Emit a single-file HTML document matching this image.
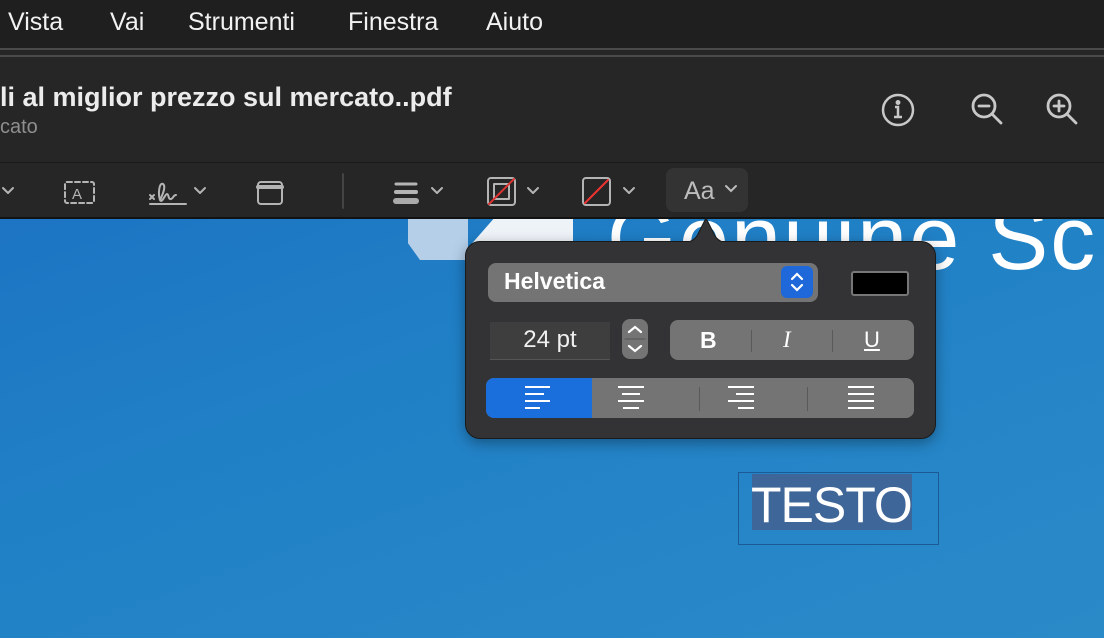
<!DOCTYPE html>
<html><head><meta charset="utf-8"><style>
*{margin:0;padding:0;box-sizing:border-box}
body{width:1104px;height:638px;overflow:hidden;position:relative;font-family:"Liberation Sans",sans-serif;background:linear-gradient(160deg,#1a6cc0 0%,#2080c6 50%,#2a8ac8 100%)}
.abs{position:absolute}
#menu{left:0;top:0;width:1104px;height:48px;background:#1f1f1f;color:#f2f2f2;font-size:25px}
#menu span{position:absolute;top:8px}
#bar{left:0;top:48px;width:1104px;height:170px;background:#262626;border-top:2px solid #4a4a4a}
#bar:before{content:"";position:absolute;left:0;top:5px;width:100%;height:2px;background:#4a4a4a}
#tb{left:0;top:162px;width:1104px;height:1px;background:#1a1a1a}
#bline{left:0;top:217px;width:1104px;height:2px;background:#121212}
.title{left:0;top:82px;color:#ececec;font-size:27px;font-weight:bold;white-space:nowrap}
.sub{left:0;top:116px;color:#8e8e8e;font-size:20px}
svg{position:absolute}
#pop{left:465px;top:241px;width:471px;height:198px;background:#333335;border:1px solid #1a1a1a;border-radius:15px;box-shadow:0 4px 14px rgba(0,0,0,.35)}
.g{background:#747474;border-radius:8px;position:absolute}
</style></head><body>
<!-- logo -->
<div class="abs" style="left:408px;top:218px;width:60px;height:42px;background:#b5cfe9;clip-path:polygon(0 0,100% 0,100% 100%,20% 100%,0 60%)"></div>
<div class="abs" style="left:468px;top:218px;width:105px;height:30px;background:#eef3f8;clip-path:polygon(25% 0,100% 0,100% 100%,0 100%)"></div>
<div class="abs" style="left:607px;top:188px;color:#fff;font-size:90px;letter-spacing:2px;white-space:nowrap">Genuine Sc</div>

<div id="menu" class="abs">
<span style="left:8px">Vista</span><span style="left:110px">Vai</span><span style="left:188px">Strumenti</span><span style="left:348px">Finestra</span><span style="left:486px">Aiuto</span>
</div>
<div id="bar" class="abs"></div>
<div class="abs title">li al miglior prezzo sul mercato..pdf</div>
<div class="abs sub">cato</div>
<!-- right icons -->
<svg style="left:880px;top:92px" width="36" height="36" viewBox="0 0 36 36" fill="none" stroke="#c8c8c8" stroke-width="2.5"><circle cx="18" cy="18" r="15"/><circle cx="18" cy="10.5" r="1.2" fill="#c8c8c8"/><path d="M15 15h3v10M14 25h8"/></svg>
<svg style="left:968px;top:90px" width="40" height="40" viewBox="0 0 40 40" fill="none" stroke="#c8c8c8" stroke-width="2.8" stroke-linecap="round"><circle cx="16" cy="16" r="11"/><path d="M24 24l9 9M11 16h10"/></svg>
<svg style="left:1043px;top:90px" width="40" height="40" viewBox="0 0 40 40" fill="none" stroke="#c8c8c8" stroke-width="2.8" stroke-linecap="round"><circle cx="16" cy="16" r="11"/><path d="M24 24l9 9M11 16h10M16 11v10"/></svg>
<div id="tb" class="abs"></div>
<!-- toolbar icons -->
<svg style="left:0;top:170px" width="760" height="45" viewBox="0 0 760 45" fill="none" stroke="#b4b4b4" stroke-width="2" stroke-linecap="round" stroke-linejoin="round">
<path d="M3 18l5 5 5-5"/>
<rect x="65" y="12" width="29" height="21" rx="2" stroke-dasharray="5 3"/>
<text x="72" y="29" fill="#b4b4b4" stroke="none" font-size="15" font-family="Liberation Sans">A</text>
<path d="M150 25l4 4M154 25l-4 4M150 34h36M160 30c3-6 6-14 3-16-4-2-5 10-3 16 2 4 5-6 7-6s1 6 4 5 2-4 5-4"/>
<path d="M195 18l5 5 5-5"/>
<rect x="258" y="12" width="24" height="22" rx="3"/><path d="M258 17h24" stroke-width="4"/>
<path d="M343 4v34" stroke="#444"/>
<path d="M396 14h20" stroke-width="3"/><path d="M396 22h20" stroke-width="4"/><path d="M396 31h20" stroke-width="6" stroke="#aaa"/>
<path d="M432 18l5 5 5-5"/>
<rect x="488" y="8" width="27" height="27" rx="3"/><rect x="494" y="14" width="15" height="15"/><path d="M489 34l25-25" stroke="#d33"/>
<path d="M528 18l5 5 5-5"/>
<rect x="583" y="8" width="27" height="27" rx="3"/><path d="M585 33l23-23" stroke="#e33"/>
<path d="M624 18l5 5 5-5"/>
</svg>
<div class="abs" style="left:666px;top:168px;width:82px;height:44px;background:#333;border-radius:8px"></div>
<div class="abs" style="left:684px;top:177px;color:#bdbdbd;font-size:25px">Aa</div>
<svg style="left:724px;top:183px" width="14" height="12" fill="none" stroke="#bdbdbd" stroke-width="2" stroke-linecap="round"><path d="M2 3l5 5 5-5"/></svg>
<div id="bline" class="abs"></div>

<!-- popover -->
<div id="pop" class="abs"></div>
<svg style="left:680px;top:216px" width="50" height="28"><path d="M0 27 Q14 27 18 18 L26 2 L34 18 Q38 27 50 27Z" fill="#333335" stroke="#1a1a1a"/><rect x="0" y="26" width="50" height="4" fill="#333335"/></svg>
<div class="g" style="left:488px;top:263px;width:330px;height:39px"></div>
<div class="abs" style="left:504px;top:268px;color:#fff;font-size:23px;font-weight:bold">Helvetica</div>
<div class="abs" style="left:781px;top:266px;width:32px;height:32px;background:#1f68d9;border-radius:6px"></div>
<svg style="left:781px;top:266px" width="32" height="32" fill="none" stroke="#fff" stroke-width="2.2" stroke-linecap="round"><path d="M11 13l5-5 5 5M11 19l5 5 5-5"/></svg>
<div class="abs" style="left:851px;top:271px;width:58px;height:25px;background:#000;border:2px solid #777;border-radius:3px"></div>
<div class="abs" style="left:490px;top:322px;width:120px;height:38px;background:#3e3e3e;border-bottom:1px solid #555"></div>
<div class="abs" style="left:490px;top:326px;width:120px;text-align:center;color:#f0f0f0;font-size:24px">24 pt</div>
<div class="g" style="left:622px;top:319px;width:26px;height:40px"></div>
<svg style="left:622px;top:319px" width="26" height="40" fill="none" stroke="#fff" stroke-width="2.2" stroke-linecap="round"><path d="M7 13l6-5 6 5M7 27l6 5 6-5"/><path d="M3 20h20" stroke="#555" stroke-width="1"/></svg>
<div class="g" style="left:670px;top:320px;width:244px;height:40px"></div>
<div class="abs" style="left:700px;top:327px;color:#fff;font-size:23px;font-weight:bold">B</div>
<div class="abs" style="left:783px;top:327px;color:#fff;font-size:23px;font-style:italic;font-family:'Liberation Serif',serif">I</div>
<div class="abs" style="left:864px;top:327px;color:#fff;font-size:22px;text-decoration:underline">U</div>
<div class="abs" style="left:751px;top:330px;width:1px;height:22px;background:#5a5a5a"></div>
<div class="abs" style="left:832px;top:330px;width:1px;height:22px;background:#5a5a5a"></div>
<div class="g" style="left:486px;top:378px;width:428px;height:40px"></div>
<div class="abs" style="left:486px;top:378px;width:106px;height:40px;background:#1a6fdc;border-radius:8px 0 0 8px"></div>
<div class="abs" style="left:699px;top:387px;width:1px;height:24px;background:#5a5a5a"></div>
<div class="abs" style="left:807px;top:387px;width:1px;height:24px;background:#5a5a5a"></div>
<svg style="left:486px;top:378px" width="428" height="40" stroke="#fff" stroke-width="2"><path d="M39 9h25M39 16h19M39 23h25M39 30h15"/><path d="M132 9h26M136 16h18M132 23h26M137 30h16"/><path d="M242 9h26M250 16h18M242 23h26M252 30h16"/><path d="M362 9h26M362 16h26M362 23h26M362 30h26"/></svg>

<!-- text box -->
<div class="abs" style="left:738px;top:472px;width:201px;height:73px;border:1px solid #1b5a95"></div>
<div class="abs" style="left:752px;top:474px;width:160px;height:56px;background:#3e6698"></div>
<div class="abs" style="left:751px;top:476px;color:#fff;font-size:50px;letter-spacing:-1px">TESTO</div>
</body></html>
